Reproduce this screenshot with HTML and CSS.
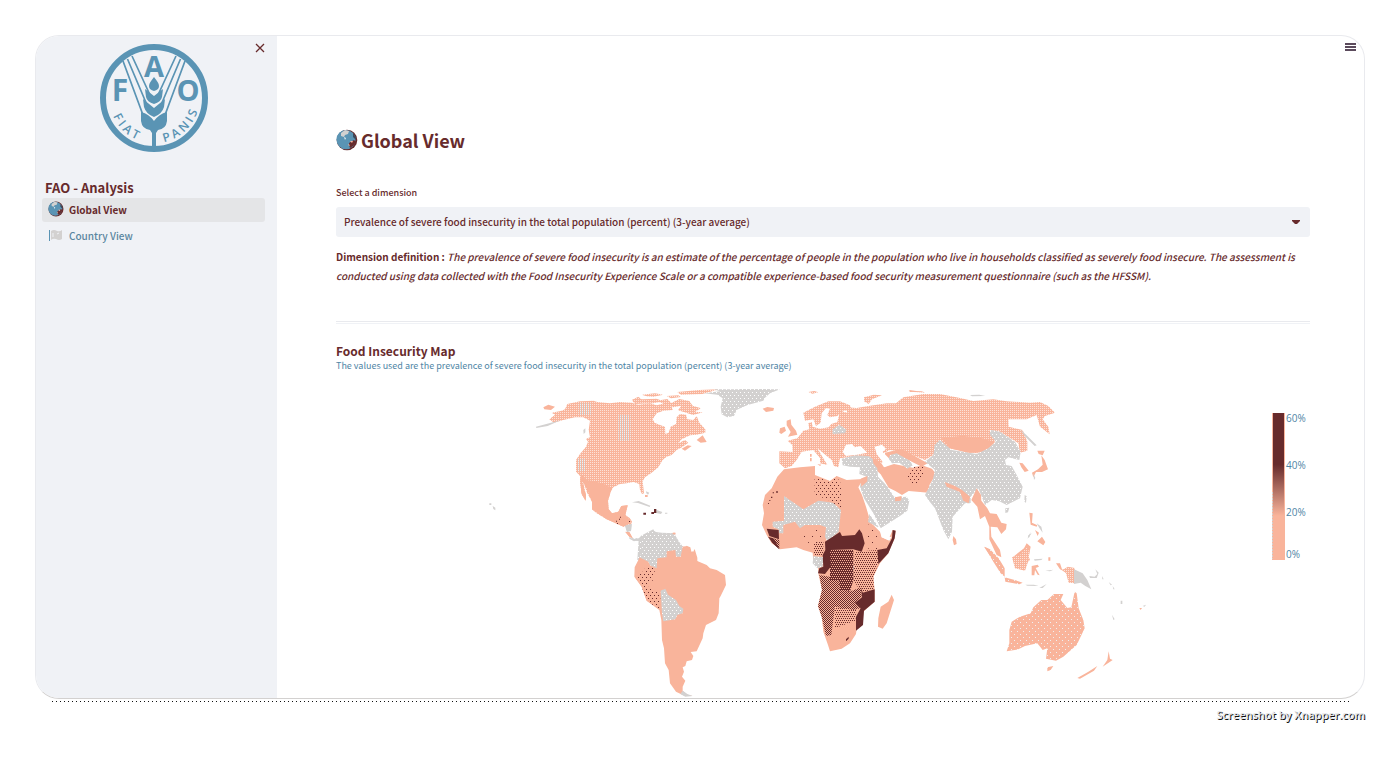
FILE: index.html
```
<!DOCTYPE html>
<html lang="en">
<head>
<meta charset="utf-8">
<title>FAO - Analysis</title>
<link rel="stylesheet" href="styles.css">
</head>
<body>
<svg class="defs" aria-hidden="true">
  <symbol id="globe" viewBox="0 0 22 22">
    <circle cx="11" cy="11" r="10.3" fill="#672b2c"/>
    <circle cx="10" cy="10.6" r="9.6" fill="#5a94b4"/>
    <path d="M5 4l4-3 4 1-1 3-3 1-1 2-3-1z" fill="#d3d1d0"/>
    <path d="M8 8l2 1-1 2z" fill="#eef1f5"/>
    <path d="M13 14l5-3 2 2-3 4-3 2-1-3z" fill="#672b2c"/>
    <path d="M14 12l3 0-1 2zM12 15l2 1-1 1z" fill="#f9b49b"/>
    <path d="M17 4l3 4v3l-3-3z" fill="#3c4a5c"/>
  </symbol>
</svg>
<div class="window">
  <aside class="sidebar">
    <button class="close" aria-label="Close sidebar"><svg viewBox="0 0 10 10"><path d="M1 1l8 8M9 1l-8 8"/></svg></button>
    <svg class="logo" viewBox="0 0 108 110" role="img" aria-label="FAO">
      <circle cx="54" cy="55" r="51" fill="none" stroke="#5a94b4" stroke-width="6"/>
      <g fill="none" stroke="#5a94b4" stroke-width="1.7">
        <path d="M23 18L43 72M27.500 16L47 62M32 13L50 52M85 18L65 72M80.500 16L61 62M76 13L58 52"/>
      </g>
      <g fill="#5a94b4">
        <path d="M54 34c3 4 5 6 5 9 0 3-2 4-5 5-3-1-5-2-5-5 0-3 2-5 5-9z"/>
        <path d="M45 46l9 7 9-7-1 8q-1 5-8 7-7-2-8-7z"/>
        <path d="M43 56l11 9 11-9-1 8q-2 7-10 10-8-3-10-10z"/>
        <path d="M41 69q8 2 13 9 5-7 13-9v9q-1 8-9 9l-2 3v17h-4V90l-2-3q-8-1-9-9z"/>
      </g>
      <g class="logo-text">
        <text x="54" y="34" font-size="29">A</text>
        <text x="20" y="58" font-size="30">F</text>
        <text x="88" y="58" font-size="29">O</text>
      </g>
      <path id="arc-left" d="M13 73A45 45 0 0 0 51 100" fill="none"/>
      <path id="arc-right" d="M64 99A45 45 0 0 0 99 62" fill="none"/>
      <text class="motto"><textPath href="#arc-left">F I A T</textPath></text>
      <text class="motto"><textPath href="#arc-right">P A N I S</textPath></text>
    </svg>
    <h2 class="side-title">FAO - Analysis</h2>
    <nav class="nav">
      <a class="item active" href="#global"><svg class="icon"><use href="#globe"/></svg>Global View</a>
      <a class="item" href="#country"><svg class="icon" viewBox="0 0 16 16"><path d="M1.500 3v11" stroke="#5a94b4"/><path d="M3 4q3-2 6 0 3 1 5-1v9q-3 2-6 0-3-1-5 1z" fill="#d3d1d0"/><path d="M5 6v4M9 7l2-1" stroke="#f0f2f6"/></svg>Country View</a>
    </nav>
  </aside>
  <main class="main">
    <button class="menu" aria-label="Menu"><i></i><i></i><i></i></button>
    <h1 class="title"><svg class="title-icon"><use href="#globe"/></svg>Global View</h1>
    <label class="label" for="dimension">Select a dimension</label>
    <div class="select-wrap">
      <select class="select" id="dimension"><option>Prevalence of severe food insecurity in the total population (percent) (3-year average)</option></select>
      <svg class="caret" viewBox="0 0 8 5"><path d="M0 0h8v1L5 4H3L0 1z"/></svg>
    </div>
    <p class="definition"><b>Dimension definition :</b> <em>The prevalence of severe food insecurity is an estimate of the percentage of people in the population who live in households classified as severely food insecure. The assessment is<br>conducted using data collected with the Food Insecurity Experience Scale or a compatible experience-based food security measurement questionnaire (such as the HFSSM).</em></p>
    <hr class="rule">
    <h2 class="map-title">Food Insecurity Map</h2>
    <p class="map-note">The values used are the prevalence of severe food insecurity in the total population (percent) (3-year average)</p>
    <svg class="map" viewBox="336 380 974 318" role="img" aria-label="Food Insecurity Map">
      <defs>
        <pattern id="light" width="6" height="6" patternUnits="userSpaceOnUse"><rect width="6" height="6" fill="#f9b49b"/><rect width="3" height="3" fill="#fde2d8"/></pattern>
        <pattern id="lighter" width="6" height="6" patternUnits="userSpaceOnUse"><rect width="6" height="6" fill="#f9b49b"/><rect width="3" height="6" fill="#d3d1d0"/><rect width="3" height="3" fill="#eef0f2"/></pattern>
        <pattern id="faint" width="18" height="18" patternUnits="userSpaceOnUse"><rect width="18" height="18" fill="#f9b49b"/><rect width="3" height="3" fill="#eef0f2"/><rect x="9" y="9" width="3" height="3" fill="#eef0f2"/></pattern>
        <pattern id="none" width="12" height="18" patternUnits="userSpaceOnUse"><rect width="12" height="18" fill="#d3d1d0"/><rect width="3" height="3" fill="#fff"/><rect x="6" y="9" width="3" height="3" fill="#fff"/></pattern>
        <pattern id="mid" width="12" height="18" patternUnits="userSpaceOnUse"><rect width="12" height="18" fill="#f9b49b"/><rect width="3" height="3" fill="#672b2c"/><rect x="6" y="9" width="3" height="3" fill="#672b2c"/></pattern>
        <pattern id="sparse" width="24" height="36" patternUnits="userSpaceOnUse"><rect width="24" height="36" fill="#f9b49b"/><rect width="3" height="3" fill="#672b2c"/><rect x="12" y="18" width="3" height="3" fill="#672b2c"/></pattern>
        <pattern id="midplus" width="6" height="12" patternUnits="userSpaceOnUse"><rect width="6" height="12" fill="#f9b49b"/><rect width="3" height="3" fill="#672b2c"/><rect x="3" y="6" width="3" height="3" fill="#672b2c"/></pattern>
        <pattern id="high" width="6" height="6" patternUnits="userSpaceOnUse"><rect width="6" height="6" fill="#f9b49b"/><rect width="3" height="3" fill="#672b2c"/><rect x="3" y="3" width="3" height="3" fill="#672b2c"/></pattern>
        <pattern id="higher" width="6" height="12" patternUnits="userSpaceOnUse"><rect width="6" height="12" fill="#672b2c"/><rect width="3" height="3" fill="#f9b49b"/><rect x="3" y="6" width="3" height="3" fill="#f9b49b"/></pattern>
        <linearGradient id="ramp" x1="0" y1="0" x2="0" y2="1"><stop offset="0" stop-color="#672b2c"/><stop offset=".35" stop-color="#672b2c"/><stop offset=".7" stop-color="#f9b49b"/><stop offset="1" stop-color="#f9b49b"/></linearGradient>
      </defs>

      <g class="land" transform="translate(480 380) scale(.333333)">
        <path fill="url(#light)" d="M262 72L300 64 340 62 352 66 390 70 420 66 455 68 475 74 510 70 530 76 555 70 575 80 578 90 550 92 530 100 518 118 524 128 540 135 555 140 556 162 566 158 572 140 588 132 590 112 600 102 618 104 622 118 640 120 650 108 658 128 676 148 676 158 650 164 630 166 605 178 595 190 615 180 625 188 606 202 590 210 575 225 560 230 548 240 535 262 515 278 495 292 488 304 492 340 486 342 480 330 478 312 460 306 440 310 420 312 400 322 392 335 384 362 386 388 396 400 415 395 424 378 443 376 436 405 450 415 456 425 452 436 430 440 400 426 380 418 350 400 336 388 336 365 322 340 308 300 318 345 318 362 306 345 300 310 300 288 288 275 288 240 300 222 318 200 324 185 318 176 330 172 326 150 330 122 310 112 285 112 250 120 222 128 208 118 225 104 215 98 245 92 255 88z"/>
        <path fill="url(#lighter)" d="M415 105h36v78h-36zM296 70h36v36h-36zM292 236h26v38h-26z"/>
        <path fill="#f9b49b" d="M302 280L318 300 345 304 378 314 395 325 384 362 386 388 396 400 415 395 424 378 443 376 436 405 456 425 430 440 380 418 336 388 336 365 318 320 304 300zM300 288L318 345 316 362 304 340z"/>
        <path fill="#f9b49b" d="M190 82l15-8 20 6-12 10-20-2zM650 180l18-14 12 20-18 2zM605 206l18-10 12 2-20 14zM495 345h8v6h-8zM436 455l12 2 10 18-10-5zM580 458h6v6h-6zM530 536l35-20 25-5 5 22 20-8 4-28 12 5 5 20 8-15 8 26v20H530z"/>
        <path fill="url(#light)" d="M455 60l20-10 10 8 45-2 20 8-30 6-55 2zM485 44l40-4 25 4-30 6-20-1zM530 62l32-5 12 12 24-12 30 6 10 14 25 8-18 10 24 2-30 8-30-10-15-4 10-14-25 5-15-5zM592 36l65-6 60-2-50 14-65 2zM560 48l35-2 8 5-30 4z"/>
        <path fill="#d3d1d0" d="M168 140l45-12 30-8-40 18-34 6zM310 150l6-5v12l-5 5zM456 367l20-4 35 14-2 4-35-12zM530 390l17 6-4 6-15-3zM498 334l10 4-4 6-5-4zM28 370h6v5h-6zM38 378l8 5v8l-6-4zM555 398h7v3h-7zM437 436l18-4-2 22-14-3zM448 470l14 10 6-6 14 4v6l-14-2-6 2-14-8z"/>
        <path fill="url(#none)" d="M476 480L482 470 495 470 518 450 528 456 545 458 582 460 600 490 610 500 586 532 560 540 472 540zM672 40L720 34 700 28 900 28 870 40 850 58 812 70 770 90 762 108 742 112 725 103 722 80 728 55 712 44z"/>
        <path fill="#672b2c" d="M490 398h8v6h-8zM514 396h8v6h-8zM522 387h7v12h-7zM408 422h3v3h-3zM417 416h3v3h-3zM420 410h3v3h-3zM411 429h3v3h-3zM447 423h3v3h-3z"/>
      </g>

      <g class="land" transform="translate(600 520) scale(.333333)">
        <path fill="#f9b49b" d="M120 110L170 100 205 92 225 88 245 80 262 78 264 100 278 94 290 122 320 135 330 145 350 150 375 165 378 195 362 228 358 235 356 280 348 300 318 315 310 340 308 355 290 394 272 396 280 408 276 420 260 424 256 438 248 442 252 455 246 470 256 482 248 500 248 512 262 524 278 528 250 526 228 515 210 490 206 450 195 430 192 385 186 360 184 300 178 270 140 242 125 200 103 170 104 142z"/>
        <path fill="url(#mid)" d="M140 138L165 146 160 180 138 195 150 205 170 215 182 220 178 268 140 242 125 200 105 172 125 160z"/>
        <path fill="url(#none)" d="M122 48L140 38 160 28 165 40 182 40 222 40 228 55 248 80 242 110 228 110 226 90 200 94 200 112 172 115 170 145 150 136 145 125 118 112 125 90zM182 212L196 206 204 224 228 240 238 258 250 266 248 280 232 285 226 298 190 304 186 280z"/>
        <path fill="#d3d1d0" d="M75 18l20-6-2 20-12 5zM94 52l16 8 14-12 2 6-16 8-14-2zM248 512l14 10 16 6-22 2-15-8z"/>
        <path fill="#f9b49b" d="M76 36h12l10 18-10-4zM218 38h8v5h-8z"/>
      </g>

      <g class="land" transform="translate(740 380) scale(.333333)">
        <path fill="url(#light)" d="M118 214L158 216 157 195 143 182 172 175 190 152 208 148 205 130 215 126 218 140 240 146 266 142 274 132 292 126 296 110 300 92 322 98 318 82 350 84 385 78 440 70 468 70 490 52 550 42 600 42 660 54 700 63 760 58 800 64 870 68 900 66 925 78 945 98 915 108 908 118 925 140 929 163 900 140 890 105 860 118 805 118 806 140 848 150 862 185 862 212 840 218 835 190 780 155 748 150 768 182 710 220 625 205 600 180 580 225 555 240 500 218 450 210 430 220 440 245 415 250 390 230 350 228 300 235 295 262 282 258 275 240 232 205 250 235 262 255 240 250 240 234 220 210 185 215 170 240 155 258 135 265 118 250z"/>
        <path fill="url(#light)" d="M190 98L225 80 265 64 300 64 330 76 335 90 310 92 292 108 270 112 262 105 270 86 258 84 245 100 242 128 228 138 220 118 195 122zM372 52l30-8 24 2-30 12-10 14-14-8zM505 32l40 2 12 4-45-3zM205 36l18-3 12 4-18 4z"/>
        <path fill="#f9b49b" d="M68 86l14-5 20 3-2 8-22 4zM120 145l14-5 4 12-14 10-6-4zM140 122l12-4 2 16 14 18 4 12-28 6 8-14-12-20zM210 222h5v8h-5zM210 234h5v10h-5zM232 252l12 2-4 4zM372 235l22-5 30 20 8 12 30-10 60 12 24-8 30 10 12 16-20 34-2 22-60-5-20 12-20-12-20-10-24-40z"/>
        <path fill="#f9b49b" d="M435 218l50-12 50 28 28 16-18 10-40-20-30-10-40 10zM605 175l62-8 60 8 38 12-30 30-50 2-56-14z"/>
        <path fill="#fff" d="M308 216L318 194 336 192 344 202 362 198 382 218 350 224 318 228zM404 200L426 194 438 206 428 216 446 234 452 252 436 260 424 240 410 222z"/>
        <path fill="url(#none)" d="M305 236L345 226 385 228 398 236 400 250 412 265 414 290 432 308 444 322 462 350 478 352 500 350 508 362 502 392 480 408 422 445 400 400 372 355 360 320 365 295 380 290 358 282 360 262 330 260 308 256zM450 225l20-5 40 22 8 14-16 10-24-18-22 2-10-14zM278 148l20-14 20 14-2 12-38 2z"/>
        <path fill="#f9b49b" d="M362 296l20-8 0 16-18 16zM465 352l20-4-2 14-18 2z"/>
        <path fill="url(#none)" d="M0 28L92 28 80 42 70 62 20 76 0 84z"/>
        <path fill="url(#mid)" d="M504 276l20-16 30-2-5 26-18 26-20 2-8-16z"/>
      </g>

      <g class="land" transform="translate(900 380) scale(.333333)">
        <path fill="url(#none)" d="M120 180L155 210 230 222 265 205 288 185 268 162 274 150 300 155 345 185 362 215 358 240 325 232 315 240 318 255 335 258 350 285 368 320 360 355 320 375 298 364 275 360 255 375 235 325 212 350 212 370 195 370 158 410 156 455 145 478 130 450 105 385 85 360 75 345 98 300 105 270 75 245 100 225 104 195zM316 385l12-2-4 14-8 2zM374 345l6 4-2 20-5-5z"/>
        <path fill="#f9b49b" d="M134 306L165 318 186 330 210 350 206 370 190 362 180 336 140 320zM160 468l8 10 2 14-8 4-4-16zM230 325L243 345 244 362 262 385 270 400 290 402 304 428 320 432 318 448 304 462 292 442 272 440 274 470 300 510 304 532 290 525 268 478 268 440 255 408 240 418 232 380 214 360zM358 248l10 2 18 22-12 4-10-14zM412 212l22 0-6 14-12-4zM424 226l10 14 10 28-18 8-18 0-8 16-4-14 18-10 14-14zM388 398l10 2-2 28 16 8-2 4-18-6zM405 450l12 8-4 10zM412 484l14-14 10 16-6 10z"/>
        <path fill="#d3d1d0" d="M360 148l20 18 30 30-6 2-28-28zM395 460l-12 16 2-10zM210 45l28-1 18 4-40 1zM410 430l14 10 4 18-10-14zM400 280l6 14-4 6z"/>
        <path fill="#f9b49b" d="M252 500L270 510 300 545 310 560 285 550zM340 530L372 505 380 490 392 500 386 530 390 540 370 555 345 550zM28 30l26 4-24 2z"/>
      </g>

      <g class="land" transform="translate(960 520) scale(.333333)">
        <path fill="url(#faint)" d="M74 80L90 88 116 115 134 145 134 170 122 160 100 125zM134 172l30 8 24 8-10 5-42-8z"/>
        <path fill="url(#light)" d="M156 112L180 105 200 80 208 95 206 120 195 152 165 145zM306 150l18-10 20 4 2 46-20-2-8-28z"/>
        <path fill="#f9b49b" d="M215 138l18-4 4 6-10 4 12 22-6-2-8-14-2 16-8 0zM288 130l12 0 6 18 10 8-16-8zM265 112h6v10h-6zM538 264l8 0-4 6z"/>
        <path fill="#d3d1d0" d="M342 148L368 160 382 180 394 208 376 198 362 188 342 192zM222 118l26-2-4 4-20 2zM388 168l16 2 8-8-6-14 10 10-6 16-20 0zM196 194l26 0 14 4-34-1zM238 204l22-12-12 12zM456 284l8 14-4 2zM482 242h5v10h-5zM548 258l10-4-4 6zM426 168l5 10-4 0zM446 186l10 8-4 2zM458 198l6 10-4 0zM256 152l24-3-10 5zM204 52l8-16-4 16z"/>
        <path fill="url(#faint)" d="M155 305L180 290 212 280 220 262 244 240 262 240 282 222 310 222 302 240 322 264 334 262 344 215 350 220 356 265 370 300 374 325 350 375 310 410 288 422 258 416 262 385 248 390 232 370 195 378 175 388 140 394 148 370 148 330zM262 442l18-4-8 12-10 4z"/>
        <path fill="#f9b49b" d="M446 394l4 22 8 4-30 20 14-20zM352 474L384 456 412 438 402 452 360 476z"/>
      </g>

      <g class="land" transform="translate(740 500) scale(.333333)">
        <path fill="#f9b49b" d="M132 -92L180 -98 225 -102 225 -75 270 -57 290 -72 320 -60 358 -62 370 -64 355 -38 366 -15 378 20 388 55 400 75 420 95 425 112 445 120 458 90 467 92 464 115 445 160 420 190 400 230 404 270 404 305 370 335 368 375 350 385 348 402 330 430 305 446 270 454 264 435 250 395 245 350 234 318 246 270 236 225 234 205 220 185 218 158 190 150 170 142 120 148 95 130 80 105 66 75 72 40 68 15 75 -15 95 -35 112 -70z"/>
        <path fill="url(#none)" d="M132 -12L190 28 235 2 280 8 303 30 296 95 262 125 255 110 258 82 240 75 195 75 180 85 165 65 130 75 130 100 118 100 115 88 98 80 98 65 132 62zM220 168l30 4-2 28-16 5-14-15zM388 42l30 42-34-18zM340 198l8-2-2 18-6-4z"/>
        <path fill="#fff" d="M420 82L440 112 455 110 448 122 425 112z"/>
        <path fill="#f9b49b" d="M455 284L462 300 440 370 428 386 414 380 415 355 422 320 445 305z"/>
        <path fill="url(#sparse)" d="M190 108L225 80 245 85 245 130 200 128zM375 70l25 10 20 30-10 40-30-5-5-30z"/>
        <path fill="url(#mid)" d="M224 -68L270 -57 290 -70 302 -50 306 26 262 -2 224 -15z"/>
        <path fill="url(#midplus)" d="M222 132L250 122 250 165 222 165zM345 155L412 150 415 192 400 230 402 266 365 278 340 240zM285 320L350 325 345 362 285 385z"/>
        <path fill="url(#high)" d="M238 225L295 235 300 270 330 275 362 262 365 290 345 308 362 325 340 330 285 320 274 405 258 408 245 350 234 318 246 270zM88 112L118 120 118 148 98 130z"/>
        <path fill="url(#higher)" d="M270 150L340 150 340 240 330 275 300 270 296 240 270 240z"/>
        <path fill="#672b2c" d="M255 125L300 96 306 108 345 105 358 88 366 100 374 130 365 155 340 148 270 150 272 200 255 222 234 220 238 205 250 200 248 165 256 150zM80 86L116 90 117 118 88 108zM84 110l18 6 17 32-22-20zM458 90L467 92 464 115 445 160 415 192 412 150 440 145 456 115zM363 262L368 278 404 268 404 305 372 332 369 375 348 392 348 350 362 325 345 308 366 292zM318 418l8-8 0 6-8 8zM98 -23h4v3h-4zM109 -27h4v6h-4zM93 -10h4v4h-4zM88 0h3v3h-3zM84 9h3v3h-3z"/>
      </g>

      <g class="legend">
        <rect x="1272" y="413" width="13" height="147" fill="#f9b49b"/>
        <rect x="1273" y="413" width="11" height="147" fill="url(#ramp)"/>
        <path d="M1272.500 492v67" stroke="#d3d1d0" stroke-dasharray="2 1"/>
        <text x="1286" y="422">60%</text>
        <text x="1286" y="469">40%</text>
        <text x="1286" y="516">20%</text>
        <text x="1286" y="558">0%</text>
      </g>
    </svg>
  </main>
</div>
<footer class="credit">Screenshot by Xnapper.com</footer>
</body>
</html>
```
FILE: styles.css
```
* { box-sizing: border-box; }
body {
  margin: 0;
  padding: 35px 35px 0;
  background: #fff;
  color: #672b2c;
  font-family: "Noto Sans CJK SC", "Noto Sans", sans-serif;
  font-size: 10px;
  font-weight: 500;
}
h1, h2, p { margin: 0; }
.defs { position: absolute; width: 0; height: 0; }
.window {
  position: relative;
  display: flex;
  border: 1px solid #e9eaee;
  border-bottom-color: #d3d1d0;
  border-radius: 24px;
}
.window::after {
  content: "";
  position: absolute;
  left: 16px;
  right: 12px;
  bottom: -4px;
  height: 1px;
  background: repeating-linear-gradient(90deg, #111 0 1px, transparent 1px 4px);
}
.sidebar {
  position: relative;
  flex: 0 0 241px;
  padding: 7px 12px 0 6px;
  background: #f0f2f6;
  border-radius: 23px 0 0 23px;
}
.logo { display: block; width: 108px; height: 110px; margin: 0 auto; }
.logo-text { font-family: "Open Sans", sans-serif; font-weight: 700; fill: #5a94b4; text-anchor: middle; }
.motto { font-family: "Open Sans", sans-serif; font-weight: 600; font-size: 12px; fill: #5a94b4; }
button { padding: 0; border: 0; background: none; }
.close { position: absolute; top: 7px; right: 12px; width: 10px; height: 10px; }
.close svg { display: block; stroke: #672b2c; stroke-width: 1.3; }
.side-title { margin-top: 25px; padding-left: 3px; font-size: 13px; line-height: 20px; }
.nav { display: flex; flex-direction: column; gap: 2px; }
.item { display: flex; align-items: center; gap: 5px; height: 24px; padding: 0 0 2px 6px; border-radius: 3px; color: #5a86a0; text-decoration: none; font-weight: 500; }
.item.active { background: #e4e5e7; color: #672b2c; font-weight: 700; }
.icon { width: 16px; height: 16px; fill: none; }
.main { position: relative; flex: 1; min-width: 0; padding: 88px 54px 0 59px; }
.menu { position: absolute; top: 7px; right: 8px; width: 11px; display: grid; gap: 1px; }
.menu i { height: 2px; background: #5b4a5c; }
.title { display: flex; align-items: center; gap: 3px; font-size: 18px; line-height: 32px; }
.title-icon { width: 22px; height: 22px; }
.label { display: block; margin-top: 29px; font-size: 9px; line-height: 16px; }
.select-wrap { position: relative; margin-top: 6px; }
.select { display: block; width: 100%; height: 30px; padding: 0 24px 2px 8px; border: 0; border-radius: 3px; background: #f0f2f6; color: #672b2c; font: inherit; appearance: none; }
.caret { position: absolute; right: 10px; top: 13px; width: 8px; height: 5px; fill: #672b2c; pointer-events: none; }
.definition { margin-top: 10px; line-height: 19px; }
.rule { margin: 36px 0 0; height: 3px; border: 0; border-top: 1px solid #e9eaee; border-bottom: 1px solid #f0f2f6; }
.map-title { margin-top: 17px; font-size: 12px; line-height: 20px; }
.map-note { font-size: 9px; line-height: 10px; color: #4f85a5; font-weight: 400; }
.map { display: block; width: 100%; margin-top: 9px; }
.legend text { font-family: "Open Sans", sans-serif; font-size: 10px; fill: #4f85a5; }
.credit { margin-top: 7px; font: 600 11px/18px "Open Sans", sans-serif; text-align: right; color: #e4e6ea; text-shadow: 1px 1px 0 #111; }
```
